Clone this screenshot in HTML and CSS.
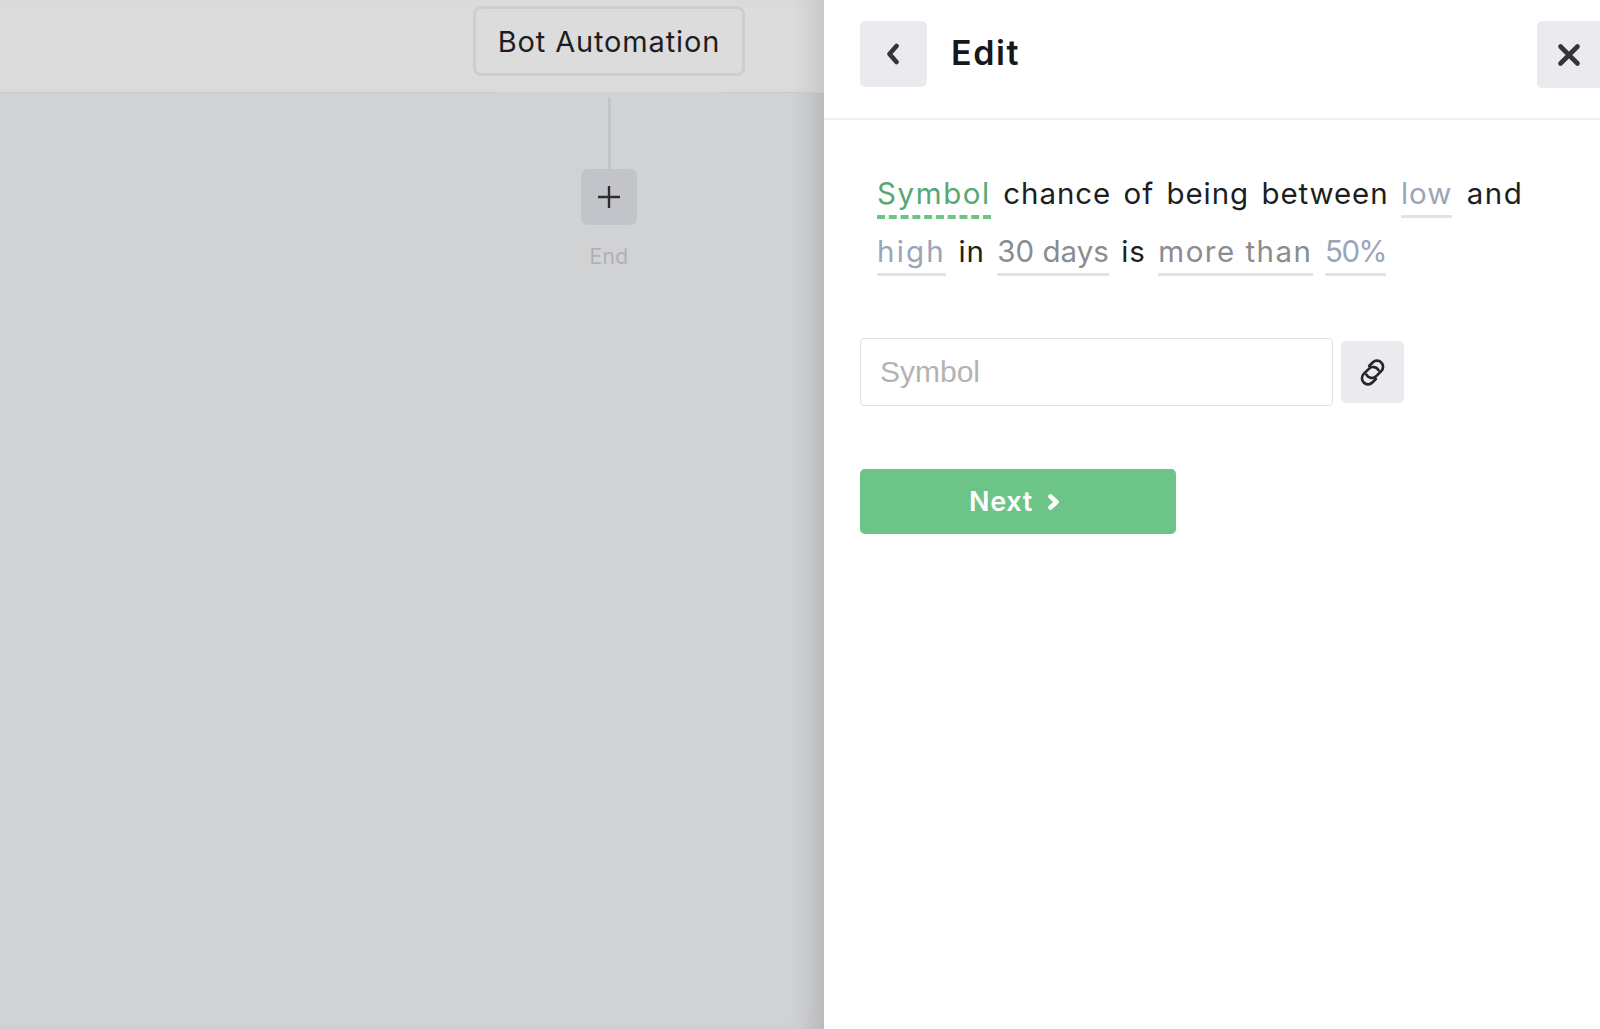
FILE: index.html
```html
<!DOCTYPE html>
<html>
<head>
<meta http-equiv="Content-Type" content="text/html; charset=utf-8"/>
<title>Bot Automation</title>
<link rel="stylesheet" href="styles.css">
</head>
<body>
<div class="app">
  <div class="canvas">
    <div class="canvas-head">
      <div class="bot-name">Bot Automation</div>
    </div>
    <div class="flow">
      <div class="flow-line"></div>
      <div class="flow-add">
        <svg width="24" height="24" viewBox="0 0 24 24"><path d="M12 1v22M1 12h22" stroke="#2a2c31" stroke-width="2.4" fill="none"/></svg>
      </div>
      <div class="flow-end">End</div>
    </div>
  </div>
  <div class="panel">
    <div class="panel-head">
      <button class="btn-grey btn-back">
        <svg width="17" height="22" viewBox="0 0 17 22"><path d="M11.5 3L4.5 11l7 8" stroke="#33353a" stroke-width="4.6" stroke-linecap="round" stroke-linejoin="round" fill="none"/></svg>
      </button>
      <div class="panel-title">Edit</div>
      <button class="btn-grey btn-close">
        <svg width="24" height="24" viewBox="0 0 24 24"><path d="M3.5 3.5l17 17M20.5 3.5l-17 17" stroke="#33353a" stroke-width="4.6" stroke-linecap="round" fill="none"/></svg>
      </button>
    </div>
    <div class="panel-body">
      <div class="sentence">
        <div class="line">
          <span class="tok tok-active">Symbol</span>
          <span>chance</span><span>of</span><span>being</span><span>between</span>
          <span class="tok tok-blue">low</span>
          <span class="word-and">and</span>
        </div>
        <div class="line">
          <span class="tok tok-blue tok-high">high</span>
          <span>in</span>
          <span class="tok tok-grey">30 days</span>
          <span>is</span>
          <span class="tok tok-grey tok-wide">more than</span>
          <span class="tok tok-blue tok-pct">50%</span>
        </div>
      </div>
      <div class="field-row">
        <input class="field" type="text" placeholder="Symbol">
        <button class="btn-grey btn-link">
          <svg width="31" height="31" viewBox="-14 -14 28 28" fill="none" stroke="#24262b" stroke-width="2.4" stroke-linecap="round"><g transform="rotate(-45)"><path d="M-5.2 -2.6A5.5 5.5 0 0 0 0 4.7H6.5A5.5 5.5 0 0 0 6.5 -6.3H2"/><path d="M5.2 2.6A5.5 5.5 0 0 0 0 -4.7H-6.5A5.5 5.5 0 0 0 -6.5 6.3H-2"/></g></svg>
        </button>
      </div>
      <button class="btn-next">Next
        <svg width="15" height="18" viewBox="0 0 15 18"><path d="M4.5 3.5L10.5 9l-6 5.5" stroke="#fff" stroke-width="4.6" stroke-linecap="round" stroke-linejoin="round" fill="none"/></svg>
      </button>
    </div>
  </div>
</div>
</body>
</html>
```
FILE: styles.css
```css
html, body {
  margin: 0;
  height: 100%;
  overflow: hidden;
}

body {
  font-family: Inter, "Noto Sans", sans-serif;
  background-color: white;
  color: #1d1e22;
}

button {
  border: none;
  padding: 0;
  font-family: inherit;
}

.app {
  display: flex;
  height: 1029px;
}

/* left side, dimmed by the open panel */
.canvas {
  width: 824px;
  flex: none;
  background-color: #d1d2d4;
  box-shadow: inset -26px 0 24px -14px rgba(0, 0, 0, 0.13);
  display: flex;
  flex-direction: column;
  align-items: center;
}

.canvas-head {
  box-sizing: border-box;
  width: 100%;
  height: 93px;
  padding: 6px 0 0 394px;
  background-color: #dcdcdc;
  border-bottom: 1px solid #c8c9cb;
  box-shadow: inset -26px 0 24px -14px rgba(0, 0, 0, 0.1);
  display: flex;
  justify-content: center;
  align-items: flex-start;
}

.bot-name {
  box-sizing: border-box;
  width: 272px;
  height: 70px;
  border: 3px solid #cdcecf;
  border-radius: 8px;
  display: flex;
  align-items: center;
  justify-content: center;
  font-size: 29px;
  letter-spacing: 0.85px;
  position: relative;
}

/* the header rule stops under the name box */
.bot-name::after {
  content: "";
  position: absolute;
  left: 20px;
  right: 20px;
  bottom: -20px;
  height: 1px;
  background-color: #d3d4d6;
}

.flow {
  padding: 5px 0 0 394px;
  display: flex;
  flex-direction: column;
  align-items: center;
}

.flow-line {
  width: 3px;
  height: 71px;
  background-color: #c3c4c7;
}

.flow-add {
  width: 56px;
  height: 56px;
  border-radius: 7px;
  background-color: #c3c4c9;
  display: flex;
  align-items: center;
  justify-content: center;
}

.flow-end {
  margin-top: 20px;
  font-size: 21px;
  letter-spacing: 0.4px;
  line-height: 24px;
  color: #b0b1b4;
}

.panel {
  flex: 1;
  min-width: 0;
  overflow: hidden;
}

.panel-head {
  box-sizing: border-box;
  height: 120px;
  padding: 21px 0 0 36px;
  border-bottom: 2px solid #f0f0f2;
  display: flex;
  align-items: flex-start;
}

.btn-grey {
  background-color: #ebebef;
  border-radius: 5px;
  display: flex;
  align-items: center;
  justify-content: center;
}

.btn-back {
  width: 67px;
  height: 66px;
}

.panel-title {
  margin-left: 24px;
  font-size: 34px;
  letter-spacing: 1.6px;
  line-height: 64px;
  font-weight: 600;
  color: #17181b;
}

.btn-close {
  width: 72px;
  height: 67px;
  margin-left: auto;
  margin-right: -9px;
  padding-right: 9px;
}

.panel-body {
  padding: 44px 0 0 36px;
}

.sentence {
  padding-left: 17px;
  font-size: 29.5px;
  letter-spacing: 0.9px;
  line-height: 58px;
}

.line {
  display: flex;
  gap: 12.5px;
  height: 58px;
}

.word-and {
  margin-left: 2px;
  letter-spacing: 1.5px;
}

.tok {
  height: 51px;
  border-bottom: 3px solid #e3e3e6;
  white-space: nowrap;
}

.tok-active {
  color: #55a971;
  letter-spacing: 1.6px;
  border-bottom: 4px dashed #6cc486;
}

.tok-blue {
  color: #9aa5b8;
}

.tok-grey {
  color: #8b8c90;
  letter-spacing: 0;
}

.tok-high {
  letter-spacing: 2.2px;
}

.tok-wide {
  letter-spacing: 1.5px;
}

.tok-pct {
  letter-spacing: -1.5px;
}

.field-row {
  margin-top: 58px;
  display: flex;
  align-items: center;
  gap: 8px;
}

.field {
  box-sizing: border-box;
  width: 473px;
  height: 68px;
  padding: 0 19px;
  border: 1px solid #e2e2e5;
  border-radius: 4px;
  font-family: "Liberation Sans", Arial, sans-serif;
  font-size: 30px;
  outline: none;
}

.field::placeholder {
  color: #b3b3b3;
  opacity: 1;
}

.btn-link {
  width: 63px;
  height: 62px;
}

.btn-next {
  margin-top: 63px;
  width: 316px;
  height: 65px;
  padding-right: 6px;
  border-radius: 5px;
  background-color: #6cc486;
  color: white;
  font-size: 27px;
  letter-spacing: 0.7px;
  font-weight: 600;
  display: flex;
  align-items: center;
  justify-content: center;
  gap: 13px;
}
```
